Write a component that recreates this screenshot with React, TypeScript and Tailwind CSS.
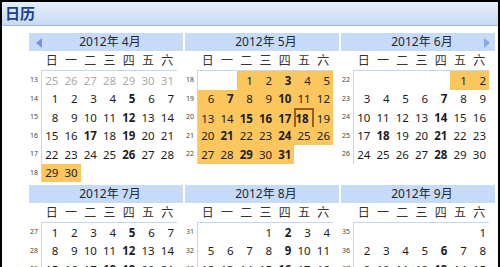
import React from 'react';

type Month = { m: number; bold: number[]; hl: number[]; lead?: boolean; prev?: 'left' | 'right' };

const YEAR = 2012;
const WEEKDAYS = ['日', '一', '二', '三', '四', '五', '六'];

const MONTHS: Month[] = [
  { m: 4, bold: [5, 12, 17, 19, 26], hl: [29, 30], lead: true, prev: 'left' },
  { m: 5, bold: [3, 7, 10, 15, 16, 17, 18, 21, 24, 29, 31], hl: Array.from({ length: 31 }, (_, i) => i + 1) },
  { m: 6, bold: [7, 14, 18, 21, 28], hl: [1, 2], prev: 'right' },
  { m: 7, bold: [5, 12, 18, 19, 26], hl: [] },
  { m: 8, bold: [2, 9, 16, 23, 30], hl: [] },
  { m: 9, bold: [6, 13, 20, 27], hl: [] },
];

type Cell = { day: number | null; gray?: boolean };

function dayOfYear(d: Date) {
  const start = new Date(YEAR, 0, 1);
  return Math.round((d.getTime() - start.getTime()) / 86400000) + 1;
}

// rows of the month, each with its week number (weeks start on Sunday, Jan 1 2012 is week 1)
function buildRows(m: number, lead?: boolean) {
  const first = new Date(YEAR, m - 1, 1);
  const days = new Date(YEAR, m, 0).getDate();
  const offset = first.getDay();
  const rows: { week: number; cells: Cell[] }[] = [];
  let start = new Date(YEAR, m - 1, 1 - offset);
  if (lead && offset === 0) start = new Date(YEAR, m - 1, -6);
  let cur = new Date(start);
  while (true) {
    if (cur.getMonth() > m - 1 || (cur.getMonth() === m - 1 && cur.getDate() > days)) break;
    const week = Math.floor((dayOfYear(cur) - 1) / 7) + 1;
    const cells: Cell[] = [];
    for (let i = 0; i < 7; i++) {
      const d = new Date(cur.getFullYear(), cur.getMonth(), cur.getDate() + i);
      if (d.getMonth() === m - 1) cells.push({ day: d.getDate() });
      else if (lead && d.getMonth() < m - 1) cells.push({ day: d.getDate(), gray: true });
      else cells.push({ day: null });
    }
    rows.push({ week, cells });
    cur = new Date(cur.getFullYear(), cur.getMonth(), cur.getDate() + 7);
  }
  return rows;
}

function Arrow({ dir }: { dir: 'left' | 'right' }) {
  return (
    <svg
      width="6"
      height="10"
      viewBox="0 0 6 10"
      className={dir === 'left' ? 'absolute left-[7px] top-[5px]' : 'absolute right-[5px] top-[5px]'}
    >
      {dir === 'left' ? (
        <path d="M6 0 L0 5 L6 10 Z" fill="#6d99d6" />
      ) : (
        <path d="M0 0 L6 5 L0 10 Z" fill="#86abe0" />
      )}
    </svg>
  );
}

function MonthView({ month }: { month: Month }) {
  const rows = buildRows(month.m, month.lead);
  return (
    <div className="h-[150px]">
      <div className="relative h-[18px] bg-[#c6dbf7] flex items-center justify-center text-[12px] text-[#1f2733] pl-[8px]">
        {YEAR}年 {month.m}月
        {month.prev && <Arrow dir={month.prev} />}
      </div>
      <div className="flex h-[19px] items-center">
        <div className="w-[13px]" />
        <div className="grid grid-cols-7 w-[135px] text-[12px] text-[#333]">
          {WEEKDAYS.map((w) => (
            <div key={w} className="text-center">{w}</div>
          ))}
        </div>
      </div>
      <div className="flex">
        <div className="w-[12px] flex flex-col pt-[1px]">
          {rows.map((r) => (
            <div key={r.week} className="h-[18.5px] flex items-center pl-[1px] text-[7px] text-[#444]">
              {r.week}
            </div>
          ))}
        </div>
        <div className="w-[136px] border-l border-t border-[#c3d7f0]">
          {rows.map((r) => (
            <div key={r.week} className="grid grid-cols-7 w-[135px] h-[18.5px]">
              {r.cells.map((c, i) => {
                const hl = c.day !== null && !c.gray && month.hl.includes(c.day);
                const bold = c.day !== null && !c.gray && month.bold.includes(c.day);
                const today = month.m === 5 && c.day === 18;
                return (
                  <div
                    key={i}
                    className={[
                      'flex items-center justify-end pr-[3px] text-[11.5px]',
                      hl ? 'bg-[#fbc65e]' : '',
                      c.gray ? 'text-[#ababab]' : 'text-[#1c1c1c]',
                      bold ? 'font-bold' : '',
                      today ? 'border-2 border-[#a9581c] pr-[1px]' : '',
                    ].join(' ')}
                  >
                    {c.day ?? ''}
                  </div>
                );
              })}
            </div>
          ))}
        </div>
      </div>
    </div>
  );
}

export default function App() {
  return (
    <div className="w-[500px] h-[267px] overflow-hidden border-x-2 border-t-2 border-black bg-white font-['Noto_Sans','Noto_Sans_CJK_SC',sans-serif]">
      <div className="h-[24px] border-b border-[#9dbde6] bg-linear-to-b from-[#e6f0fc] to-[#c7daf4] pl-[3px] flex items-center text-[15px] font-bold text-[#15428b] font-['Noto_Sans_CJK_SC',sans-serif]">
        日历
      </div>
      <div className="pl-[27px] pt-[7px] grid grid-cols-[154px_154px_154px] gap-x-[2px] gap-y-[2px]">
        {MONTHS.map((m) => (
          <MonthView key={m.m} month={m} />
        ))}
      </div>
    </div>
  );
}
